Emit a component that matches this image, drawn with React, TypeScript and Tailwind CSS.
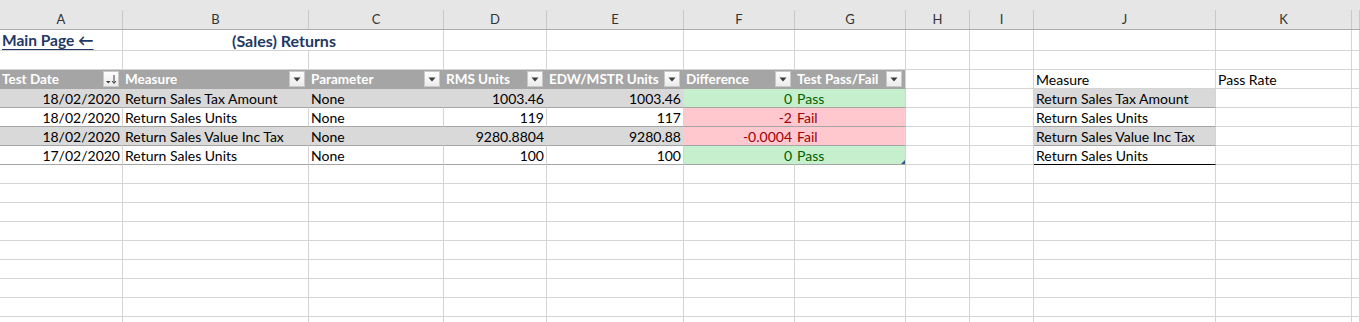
import React from "react";

type Kind = "plain" | "th" | "band" | "row" | "good" | "bad" | "thEdge" | "goodEdge" | "badEdge" | "jBand" | "jRow" | "jBandLast" | "jRowLast";

// full class strings per cell kind (fill + gridlines)
const kinds: Record<Kind, string> = {
  plain: "bg-white border-r border-b border-[#d4d4d4]",
  th: "bg-[#a5a5a5] text-white font-bold text-[13.5px] border-r border-b border-[#a5a5a5]",
  thEdge: "bg-[#a5a5a5] text-white font-bold text-[13.5px] border-r border-b border-r-[#d4d4d4] border-b-[#a5a5a5]",
  band: "bg-[#d9d9d9] border-r border-b border-r-[#d9d9d9] border-b-[#a5a5a5]",
  row: "bg-white border-r border-b border-r-[#d4d4d4] border-b-[#a5a5a5]",
  good: "bg-[#c6efce] text-[#006100] border-r border-b border-r-[#c6efce] border-b-[#a5a5a5]",
  goodEdge: "bg-[#c6efce] text-[#006100] border-r border-b border-r-[#d4d4d4] border-b-[#a5a5a5]",
  bad: "bg-[#ffc7ce] text-[#9c0006] border-r border-b border-r-[#ffc7ce] border-b-[#a5a5a5]",
  badEdge: "bg-[#ffc7ce] text-[#9c0006] border-r border-b border-r-[#d4d4d4] border-b-[#a5a5a5]",
  jBand: "bg-[#d9d9d9] border-r border-b border-r-[#d4d4d4] border-b-[#a5a5a5]",
  jRow: "bg-white border-r border-b border-r-[#d4d4d4] border-b-[#a5a5a5]",
  jBandLast: "bg-[#d9d9d9] border-r border-b border-r-[#d4d4d4] border-b-black",
  jRowLast: "bg-white border-r border-b border-r-[#d4d4d4] border-b-black",
};

const letters = ["A", "B", "C", "D", "E", "F", "G", "H", "I", "J", "K", ""];

const FilterButton = ({ sorted = false }: { sorted?: boolean }) => (
  <span className="ml-auto mr-px flex h-4 w-4 shrink-0 items-center justify-center border border-[#c9c9c9] bg-gradient-to-b from-[#fefefe] to-[#ececec]">
    {sorted ? (
      <svg width="14" height="14" viewBox="0 0 14 14">
        <path d="M2 9h4.5L4.25 11.5z" fill="#3c3c3c" />
        <path d="M10 3v8" stroke="#3c3c3c" strokeWidth="1" />
        <path d="M8 9l2 2.5L12 9" fill="none" stroke="#3c3c3c" strokeWidth="1" />
      </svg>
    ) : (
      <svg width="14" height="14" viewBox="0 0 14 14">
        <path d="M3.5 5.5h7L7 9.5z" fill="#3c3c3c" />
      </svg>
    )}
  </span>
);

const Cell = ({ kind = "plain", align = "left", children, extra = "" }: { kind?: Kind; align?: "left" | "right"; children?: React.ReactNode; extra?: string }) => (
  <div className={`${kinds[kind]} flex items-center overflow-hidden whitespace-nowrap px-[2px] ${align === "right" ? "justify-end" : "justify-start"} ${extra}`}>
    {children}
  </div>
);

const headers = ["Test Date", "Measure", "Parameter", "RMS Units", "EDW/MSTR Units", "Difference", "Test Pass/Fail"];

const rows = [
  { date: "18/02/2020", measure: "Return Sales Tax Amount", rms: "1003.46", edw: "1003.46", diff: "0", res: "Pass" },
  { date: "18/02/2020", measure: "Return Sales Units", rms: "119", edw: "117", diff: "-2", res: "Fail" },
  { date: "18/02/2020", measure: "Return Sales Value Inc Tax", rms: "9280.8804", edw: "9280.88", diff: "-0.0004", res: "Fail" },
  { date: "17/02/2020", measure: "Return Sales Units", rms: "100", edw: "100", diff: "0", res: "Pass" },
];

const Blank = ({ n }: { n: number }) => (
  <>
    {Array.from({ length: n }).map((_, i) => (
      <Cell key={i} />
    ))}
  </>
);

export default function App() {
  return (
    <div className="h-[322px] w-[1360px] overflow-hidden bg-white font-['Lato','Open_Sans',sans-serif] text-[14px] text-black">
      <div className="grid grid-cols-[123px_186px_135px_103px_137px_111px_111px_64px_64px_182px_136px_1fr] grid-rows-[30px_21px_19px_19px_19px_19px_19px_19px_19px_19px_19px_19px_19px_19px_19px_19px_19px]">
        {/* column letters */}
        {letters.map((l, i) => (
          <div key={i} className="flex items-end border-b border-[#ababab] bg-[#e6e6e6]">
            <div className="flex h-[19px] w-full items-center justify-center border-r border-[#c8c8c8] text-[13px] text-[#333]">
              {l}
            </div>
          </div>
        ))}

        {/* row 1: link + title */}
        <Cell extra="pt-[2px]">
          <span className="text-[15.5px] font-bold text-[#1f3864] underline decoration-[1.5px] underline-offset-[3px]">Main Page ←</span>
        </Cell>
        <div className="col-span-2 flex items-center justify-center border-b border-r border-[#d4d4d4] pl-[2px] pt-[2px] text-[16px] font-bold text-[#1f3864]">
          (Sales) Returns
        </div>
        <Blank n={9} />

        {/* row 2 */}
        <Blank n={12} />

        {/* table headers */}
        {headers.map((h, i) => (
          <Cell key={h} kind={i === 6 ? "thEdge" : "th"}>
            <span>{h}</span>
            <FilterButton sorted={i === 0} />
          </Cell>
        ))}
        <Cell />
        <Cell />
        <Cell>Measure</Cell>
        <Cell>Pass Rate</Cell>
        <Cell />

        {/* data rows */}
        {rows.map((r, i) => {
          const banded = i % 2 === 0;
          const base: Kind = banded ? "band" : "row";
          const pass = r.res === "Pass";
          const last = i === rows.length - 1;
          return (
            <React.Fragment key={i}>
              <Cell kind={base} align="right">{r.date}</Cell>
              <Cell kind={base}>{r.measure}</Cell>
              <Cell kind={base}>None</Cell>
              <Cell kind={base} align="right">{r.rms}</Cell>
              <Cell kind={base} align="right">{r.edw}</Cell>
              <Cell kind={pass ? "good" : "bad"} align="right">{r.diff}</Cell>
              <Cell kind={pass ? "goodEdge" : "badEdge"} extra="relative">
                {r.res}
                {last && (
                  <svg className="absolute bottom-0 right-0" width="4" height="4" viewBox="0 0 4 4">
                    <path d="M4 0v4H0z" fill="#2f5597" />
                  </svg>
                )}
              </Cell>
              <Cell />
              <Cell />
              <Cell kind={last ? (banded ? "jBandLast" : "jRowLast") : banded ? "jBand" : "jRow"}>{r.measure}</Cell>
              <Cell />
              <Cell />
            </React.Fragment>
          );
        })}

        {/* empty rows below */}
        <Blank n={12 * 9} />
      </div>
    </div>
  );
}
